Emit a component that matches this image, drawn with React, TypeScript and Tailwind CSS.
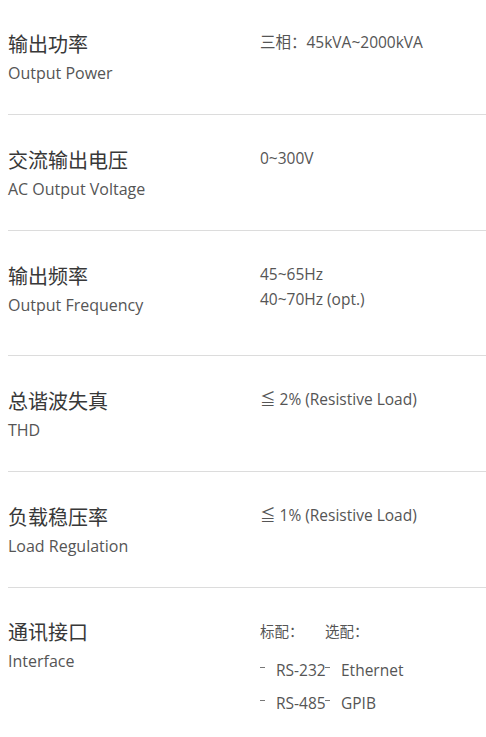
const font = { fontFamily: '"Open Sans", "Noto Sans CJK SC", sans-serif' };

type Spec = { zh: string; en: string; values: string[] };

const specs: Spec[] = [
  { zh: "输出功率", en: "Output Power", values: ["三相：45kVA~2000kVA"] },
  { zh: "交流输出电压", en: "AC Output Voltage", values: ["0~300V"] },
  { zh: "输出频率", en: "Output Frequency", values: ["45~65Hz", "40~70Hz (opt.)"] },
  { zh: "总谐波失真", en: "THD", values: ["≦ 2% (Resistive Load)"] },
  { zh: "负载稳压率", en: "Load Regulation", values: ["≦ 1% (Resistive Load)"] },
];

function Dash() {
  return <span className="inline-block shrink-0 w-[5px] h-px bg-[#777] mb-[7px] mr-[11px]" />;
}

function Label({ zh, en }: { zh: string; en: string }) {
  return (
    <div className="w-[252px] shrink-0">
      <div className="text-[20px] leading-[30px] text-[#383838]">{zh}</div>
      <div className="text-[16px] leading-[27px] text-[#555]">{en}</div>
    </div>
  );
}

export default function App() {
  return (
    <div className="bg-white min-h-screen pl-2" style={font}>
      {specs.map((s, i) => (
        <div
          key={s.zh}
          className={`flex border-b border-[#dcdcdc] pb-[27px] ${i === 0 ? "pt-[30px]" : "pt-[31px]"}`}
        >
          <Label zh={s.zh} en={s.en} />
          <div className="text-[15.5px] leading-[25px] text-[#555]">
            {s.values.map((v) => (
              <div key={v}>{v}</div>
            ))}
            {s.values.length > 1 && <div className="h-[16px]" />}
          </div>
        </div>
      ))}
      <div className="flex pt-[30px] pb-[20px]">
        <Label zh="通讯接口" en="Interface" />
        <div className="text-[15.5px] text-[#555] whitespace-nowrap">
          <div className="flex text-[14.5px] leading-[30px] -mt-[1px]">
            <span className="w-[65px] shrink-0">标配：</span>
            <span>选配：</span>
          </div>
          <div className="mt-[11px] flex flex-col gap-[8px] leading-[25px]">
            <div className="flex">
              <span className="w-[65px] shrink-0 flex items-center"><Dash />RS-232</span>
              <span className="flex items-center"><Dash />Ethernet</span>
            </div>
            <div className="flex">
              <span className="w-[65px] shrink-0 flex items-center"><Dash />RS-485</span>
              <span className="flex items-center"><Dash />GPIB</span>
            </div>
          </div>
        </div>
      </div>
    </div>
  );
}
